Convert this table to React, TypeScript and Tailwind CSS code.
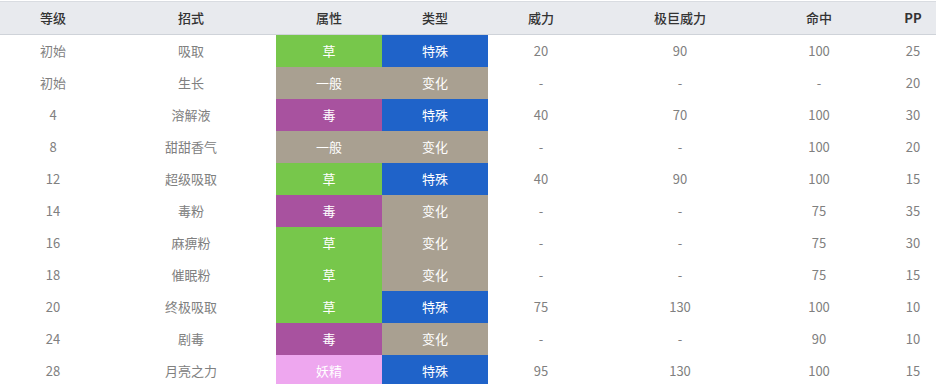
import React from "react";

type Row = [string, string, string, string, string, string, string, string];

const rows: Row[] = [
  ["初始", "吸取", "草", "特殊", "20", "90", "100", "25"],
  ["初始", "生长", "一般", "变化", "-", "-", "-", "20"],
  ["4", "溶解液", "毒", "特殊", "40", "70", "100", "30"],
  ["8", "甜甜香气", "一般", "变化", "-", "-", "100", "20"],
  ["12", "超级吸取", "草", "特殊", "40", "90", "100", "15"],
  ["14", "毒粉", "毒", "变化", "-", "-", "75", "35"],
  ["16", "麻痹粉", "草", "变化", "-", "-", "75", "30"],
  ["18", "催眠粉", "草", "变化", "-", "-", "75", "15"],
  ["20", "终极吸取", "草", "特殊", "75", "130", "100", "10"],
  ["24", "剧毒", "毒", "变化", "-", "-", "90", "10"],
  ["28", "月亮之力", "妖精", "特殊", "95", "130", "100", "15"],
];

const typeBg: Record<string, string> = {
  草: "bg-[#77c74b]",
  一般: "bg-[#a9a091]",
  毒: "bg-[#a8529f]",
  妖精: "bg-[#eea7ef]",
};

const catBg: Record<string, string> = {
  特殊: "bg-[#1f63c9]",
  变化: "bg-[#a9a091]",
};

const headers = ["等级", "招式", "属性", "类型", "威力", "极巨威力", "命中", "PP"];

const grid =
  "grid grid-cols-[106px_170px_106px_106px_106px_172px_106px_82px] w-[954px]";

export default function App() {
  return (
    <div
      className="w-[936px] h-[384px] overflow-hidden bg-white pt-px"
      style={{ fontFamily: '"Microsoft YaHei", "Noto Sans CJK SC", "Noto Sans", sans-serif' }}
    >
      <div
        className={`${grid} h-[34px] bg-[#e8eaee] border-t border-b border-t-[#d9dce1] border-b-[#cfd3d9]`}
      >
        {headers.map((h) => (
          <div
            key={h}
            className={`flex items-center justify-center text-[13px] text-[#333] ${
              h === "PP" ? "font-bold" : "font-medium"
            }`}
          >
            {h}
          </div>
        ))}
      </div>
      {rows.map((r, i) => (
        <div key={i} className={`${grid} h-[32px]`}>
          {r.map((c, j) => {
            let cls = "text-[#808080]";
            if (j === 2) cls = `${typeBg[c]} text-white`;
            if (j === 3) cls = `${catBg[c]} text-white`;
            return (
              <div
                key={j}
                className={`flex items-center justify-center text-[13px] ${cls}`}
              >
                {c}
              </div>
            );
          })}
        </div>
      ))}
    </div>
  );
}
